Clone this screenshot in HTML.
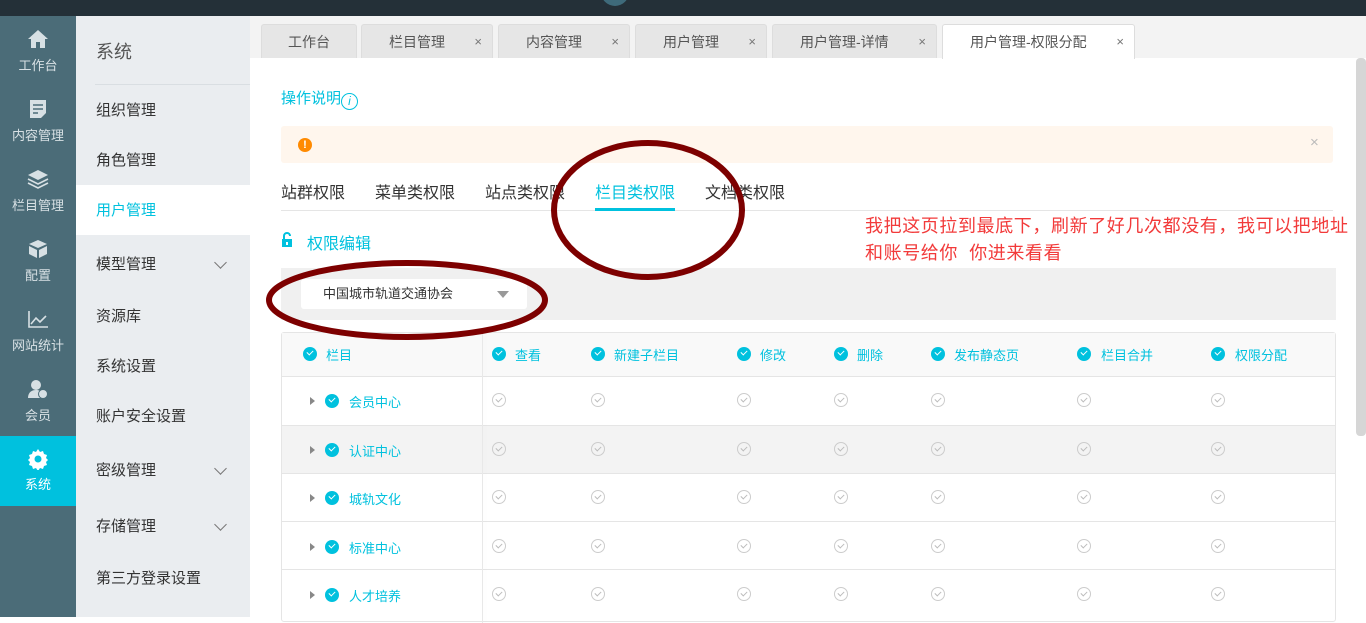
<!DOCTYPE html>
<html><head><meta charset="utf-8"><style>
*{margin:0;padding:0;box-sizing:border-box}
body{width:1366px;height:617px;overflow:hidden;position:relative;background:#fff;font-family:"Liberation Sans","Noto Sans CJK SC",sans-serif;color:#333}
.a{position:absolute;white-space:nowrap}
.side{left:0;top:16px;width:76px;height:601px;background:#4b6c78}
.ni{position:absolute;left:0;width:76px;height:70px;text-align:center;color:#d7e0e4;font-size:13px}
.ni svg{display:block;margin:13px auto 6px}
.sub{left:76px;top:16px;width:174px;height:601px;background:#eaedf0}
.si{position:absolute;left:20px;font-size:15px;color:#333}
.chev{position:absolute;left:140px;width:9px;height:9px;border-right:1.3px solid #777;border-bottom:1.3px solid #777;transform:rotate(45deg)}
.tab{position:absolute;top:24px;height:34px;background:#e6e6e6;border:1px solid #ddd;border-bottom:none;border-radius:3px 3px 0 0;font-size:14px;color:#555;line-height:34px}
.tab .x{position:absolute;right:10px;top:0;font-size:13px;color:#777}
.ck{position:absolute;width:14px;height:14px;border-radius:50%;background:#00c1de}
.ck:after{content:"";position:absolute;left:4px;top:3px;width:5px;height:3px;border-left:1.5px solid #fff;border-bottom:1.5px solid #fff;transform:rotate(-45deg)}
.gk{position:absolute;width:14px;height:14px;border-radius:50%;border:1px solid #ccc}
.gk:after{content:"";position:absolute;left:3px;top:3px;width:5px;height:3px;border-left:1px solid #bbb;border-bottom:1px solid #bbb;transform:rotate(-45deg)}
.cy{color:#00c1de}
.tri{position:absolute;width:0;height:0;border-top:4px solid transparent;border-bottom:4px solid transparent;border-left:5px solid #888}
</style></head><body>
<div class="a" style="left:0;top:0;width:1366px;height:16px;background:#243038"></div>
<div class="a" style="left:601px;top:-22px;width:28px;height:28px;border-radius:50%;background:#3e6a7a"></div>

<div class="a side">
 <div class="ni" style="top:0"><svg width="22" height="20" viewBox="0 0 22 20"><path d="M11 1 L1 10 H4 V19 H9 V13 H13 V19 H18 V10 H21Z" fill="#d7e0e4"/></svg>工作台</div>
 <div class="ni" style="top:70px"><svg width="20" height="20" viewBox="0 0 20 20"><path d="M2 1H18V14L13 19H2Z" fill="#d7e0e4"/><path d="M5 6H15M5 10H15M5 14H10" stroke="#4b6c78" stroke-width="1.6"/></svg>内容管理</div>
 <div class="ni" style="top:140px"><svg width="22" height="20" viewBox="0 0 22 20"><path d="M11 1L21 6L11 11L1 6Z" fill="#d7e0e4"/><path d="M1 10L11 15L21 10M1 14L11 19L21 14" stroke="#d7e0e4" stroke-width="1.6" fill="none"/></svg>栏目管理</div>
 <div class="ni" style="top:210px"><svg width="22" height="20" viewBox="0 0 22 20"><path d="M11 1L20 5L11 9L2 5Z" fill="#d7e0e4"/><path d="M2 7L10 11V19L2 15Z M20 7L12 11V19L20 15Z" fill="#d7e0e4"/></svg>配置</div>
 <div class="ni" style="top:280px"><svg width="22" height="20" viewBox="0 0 22 20"><path d="M2 2V18H21M4 15L9 9L13 13L19 7" stroke="#d7e0e4" stroke-width="1.6" fill="none"/></svg>网站统计</div>
 <div class="ni" style="top:350px"><svg width="22" height="20" viewBox="0 0 22 20"><circle cx="9" cy="6" r="5" fill="#d7e0e4"/><path d="M1 19C1 13 5 11 9 11C12 11 13 12 13 12V19Z" fill="#d7e0e4"/><circle cx="16" cy="15" r="4.5" fill="#d7e0e4" stroke="#4b6c78"/></svg>会员</div>
 <div class="ni" style="top:420px;background:#00c1de;color:#fff"><svg width="22" height="22" viewBox="0 0 22 22" style="margin:12px auto 4px"><path d="M11 1l2 3 3-1 1 3 3 1-1 3 2 2-2 2 1 3-3 1-1 3-3-1-2 3-2-3-3 1-1-3-3-1 1-3-2-2 2-2-1-3 3-1 1-3 3 1z" fill="#fff"/><circle cx="11" cy="11" r="3.5" fill="#00c1de"/></svg>系统</div>
</div>

<div class="a sub">
 <div class="si" style="top:22px;font-size:18px;color:#555">系统</div>
 <div class="a" style="left:19px;top:68px;width:155px;height:1px;background:#d9dee2"></div>
 <div class="si" style="top:83px">组织管理</div>
 <div class="si" style="top:133px">角色管理</div>
 <div class="a" style="left:0;top:169px;width:174px;height:50px;background:#fff"></div>
 <div class="si cy" style="top:183px">用户管理</div>
 <div class="si" style="top:237px">模型管理</div><div class="chev" style="top:242px"></div>
 <div class="si" style="top:289px">资源库</div>
 <div class="si" style="top:339px">系统设置</div>
 <div class="si" style="top:389px">账户安全设置</div>
 <div class="si" style="top:443px">密级管理</div><div class="chev" style="top:448px"></div>
 <div class="si" style="top:499px">存储管理</div><div class="chev" style="top:504px"></div>
 <div class="si" style="top:551px">第三方登录设置</div>
</div>

<div class="a" style="left:250px;top:16px;width:1116px;height:42px;background:#f3f3f3"></div>
<div class="tab" style="left:261px;width:96px;text-align:center">工作台</div>
<div class="tab" style="left:361px;width:132px;padding-left:27px">栏目管理<span class="x">×</span></div>
<div class="tab" style="left:498px;width:132px;padding-left:27px">内容管理<span class="x">×</span></div>
<div class="tab" style="left:635px;width:132px;padding-left:27px">用户管理<span class="x">×</span></div>
<div class="tab" style="left:772px;width:165px;padding-left:27px">用户管理-详情<span class="x">×</span></div>
<div class="tab" style="left:942px;width:193px;padding-left:27px;background:#fff;height:35px">用户管理-权限分配<span class="x">×</span></div>

<div class="a" style="left:1356px;top:58px;width:10px;height:378px;background:#d6d6d6;border-radius:4px"></div>

<div class="a cy" style="left:281px;top:87px;font-size:15px">操作说明<span style="display:inline-block;width:17px;height:17px;border:1px solid #00c1de;border-radius:50%;font-size:12px;text-align:center;line-height:15px;font-style:italic;vertical-align:-2px">i</span></div>
<div class="a" style="left:281px;top:126px;width:1052px;height:37px;background:#fff6ed;border-radius:3px"></div>
<div class="a" style="left:298px;top:138px;width:14px;height:14px;border-radius:50%;background:#ff8a00;color:#fff;font-size:11px;font-weight:bold;text-align:center;line-height:14px">!</div>
<div class="a" style="left:1310px;top:134px;color:#bbb;font-size:15px">×</div>

<div class="a" style="left:281px;top:179px;font-size:16px;color:#333">站群权限</div>
<div class="a" style="left:375px;top:179px;font-size:16px;color:#333">菜单类权限</div>
<div class="a" style="left:485px;top:179px;font-size:16px;color:#333">站点类权限</div>
<div class="a cy" style="left:595px;top:179px;font-size:16px">栏目类权限</div>
<div class="a" style="left:705px;top:179px;font-size:16px;color:#333">文档类权限</div>
<div class="a" style="left:281px;top:210px;width:1052px;height:1px;background:#e5e5e5"></div>
<div class="a" style="left:595px;top:208px;width:80px;height:3px;background:#00c1de"></div>

<svg class="a" style="left:280px;top:232px" width="16" height="16" viewBox="0 0 16 16"><path d="M4 7V4a3 3 0 0 1 6 0" stroke="#00c1de" stroke-width="2" fill="none"/><rect x="2" y="7" width="10" height="8" fill="#00c1de"/><rect x="6" y="10" width="2" height="3" fill="#fff"/></svg>
<div class="a cy" style="left:307px;top:230px;font-size:16px">权限编辑</div>

<div class="a" style="left:281px;top:268px;width:1055px;height:52px;background:#f0f0f0"></div>
<div class="a" style="left:301px;top:279px;width:226px;height:30px;background:#fff;border-radius:3px;font-size:13px;line-height:30px;padding-left:22px;color:#333">中国城市轨道交通协会</div>
<div class="a" style="left:497px;top:291px;border-left:6px solid transparent;border-right:6px solid transparent;border-top:7px solid #999"></div>

<div class="a" style="left:281px;top:332px;width:1055px;height:290px;border:1px solid #e5e5e5;border-radius:3px;background:#fff"></div>
<div class="a" style="left:282px;top:333px;width:1053px;height:44px;background:#f9f9f9;border-bottom:1px solid #e5e5e5"></div>
<div class="a" style="left:282px;top:426px;width:1053px;height:47px;background:#f3f3f3"></div>
<div class="a" style="left:282px;top:425px;width:1053px;height:1px;background:#e5e5e5"></div>
<div class="a" style="left:282px;top:473px;width:1053px;height:1px;background:#e5e5e5"></div>
<div class="a" style="left:282px;top:521px;width:1053px;height:1px;background:#e5e5e5"></div>
<div class="a" style="left:282px;top:569px;width:1053px;height:1px;background:#e5e5e5"></div>
<div class="a" style="left:482px;top:333px;width:1px;height:290px;background:#e8e8e8;box-shadow:2px 0 4px rgba(0,0,0,.04)"></div>

<div class="ck" style="left:303px;top:347px"></div><div class="a cy" style="left:326px;top:345px;font-size:13px">栏目</div>
<div class="ck" style="left:492px;top:347px"></div><div class="a cy" style="left:515px;top:345px;font-size:13px">查看</div>
<div class="ck" style="left:591px;top:347px"></div><div class="a cy" style="left:614px;top:345px;font-size:13px">新建子栏目</div>
<div class="ck" style="left:737px;top:347px"></div><div class="a cy" style="left:760px;top:345px;font-size:13px">修改</div>
<div class="ck" style="left:834px;top:347px"></div><div class="a cy" style="left:857px;top:345px;font-size:13px">删除</div>
<div class="ck" style="left:931px;top:347px"></div><div class="a cy" style="left:954px;top:345px;font-size:13px">发布静态页</div>
<div class="ck" style="left:1077px;top:347px"></div><div class="a cy" style="left:1101px;top:345px;font-size:13px">栏目合并</div>
<div class="ck" style="left:1211px;top:347px"></div><div class="a cy" style="left:1235px;top:345px;font-size:13px">权限分配</div>

<div id="rows"></div>
<script>
var names=["会员中心","认证中心","城轨文化","标准中心","人才培养"],xs=[492,591,737,834,931,1077,1211],h="";
names.forEach(function(n,i){var y=394+i*48.5;
h+='<div class="tri" style="left:310px;top:'+(y+3)+'px"></div><div class="ck" style="left:325px;top:'+y+'px"></div><div class="a cy" style="left:349px;top:'+(y-2)+'px;font-size:13px">'+n+'</div>';
xs.forEach(function(x){h+='<div class="gk" style="left:'+x+'px;top:'+(y-1)+'px"></div>'});});
document.getElementById("rows").innerHTML=h;
</script>

<div class="a" style="left:865px;top:213px;font-size:18px;letter-spacing:0.6px;color:#f23a3a;line-height:27px">我把这页拉到最底下，刷新了好几次都没有，我可以把地址<br>和账号给你&nbsp;&nbsp;你进来看看</div>

<svg class="a" style="left:0;top:0" width="1366" height="617"><ellipse cx="648" cy="210" rx="94" ry="67" fill="none" stroke="#7d0000" stroke-width="6"/><ellipse cx="407" cy="300" rx="138" ry="37" fill="none" stroke="#7d0000" stroke-width="6"/></svg>
</body></html>
